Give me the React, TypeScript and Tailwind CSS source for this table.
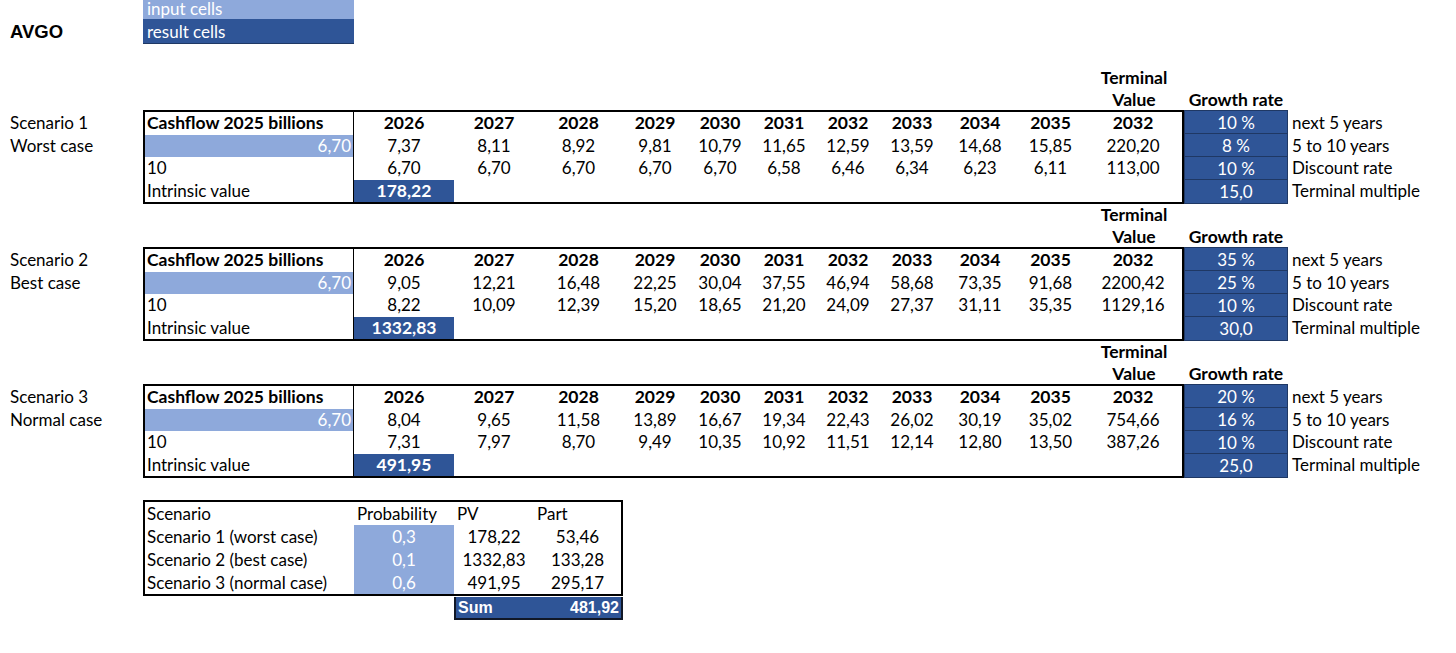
import React from "react"

const years = ["2026", "2027", "2028", "2029", "2030", "2031", "2032", "2033", "2034", "2035"]

// inner widths of the year columns (C..L) and the terminal value column
const colW = [
  "w-[100px]",
  "w-[80px]",
  "w-[89px]",
  "w-[64px]",
  "w-[66px]",
  "w-[62px]",
  "w-[66px]",
  "w-[62px]",
  "w-[74px]",
  "w-[67px]",
  "w-[98px]",
]

const growthLabels = ["next 5 years", "5 to 10 years", "Discount rate", "Terminal multiple"]

interface Scenario {
  title: string
  name: string
  projected: string[]
  discounted: string[]
  intrinsic: string
  growth: string[]
}

const scenarios: Scenario[] = [
  {
    title: "Scenario 1",
    name: "Worst case",
    projected: ["7,37", "8,11", "8,92", "9,81", "10,79", "11,65", "12,59", "13,59", "14,68", "15,85", "220,20"],
    discounted: ["6,70", "6,70", "6,70", "6,70", "6,70", "6,58", "6,46", "6,34", "6,23", "6,11", "113,00"],
    intrinsic: "178,22",
    growth: ["10 %", "8 %", "10 %", "15,0"],
  },
  {
    title: "Scenario 2",
    name: "Best case",
    projected: ["9,05", "12,21", "16,48", "22,25", "30,04", "37,55", "46,94", "58,68", "73,35", "91,68", "2200,42"],
    discounted: ["8,22", "10,09", "12,39", "15,20", "18,65", "21,20", "24,09", "27,37", "31,11", "35,35", "1129,16"],
    intrinsic: "1332,83",
    growth: ["35 %", "25 %", "10 %", "30,0"],
  },
  {
    title: "Scenario 3",
    name: "Normal case",
    projected: ["8,04", "9,65", "11,58", "13,89", "16,67", "19,34", "22,43", "26,02", "30,19", "35,02", "754,66"],
    discounted: ["7,31", "7,97", "8,70", "9,49", "10,35", "10,92", "11,51", "12,14", "12,80", "13,50", "387,26"],
    intrinsic: "491,95",
    growth: ["20 %", "16 %", "10 %", "25,0"],
  },
]

const summary = [
  { name: "Scenario 1 (worst case)", p: "0,3", pv: "178,22", part: "53,46" },
  { name: "Scenario 2 (best case)", p: "0,1", pv: "1332,83", part: "133,28" },
  { name: "Scenario 3 (normal case)", p: "0,6", pv: "491,95", part: "295,17" },
]

function ScenarioBlock({ s }: { s: Scenario }) {
  return (
    <div className="flex flex-col">
      {/* header above the table */}
      <div className="flex h-[43px] text-[17.5px] font-bold">
        <div className="w-[1084px]" />
        <div className="flex w-[100px] flex-col items-center leading-[21.5px]">
          <span>Terminal</span>
          <span>Value</span>
        </div>
        <div className="flex w-[104px] items-end justify-center whitespace-nowrap leading-[21.5px]">Growth rate</div>
      </div>

      <div className="flex">
        <div className="flex w-[143px] flex-col pl-[10px] pt-[2px]">
          <div className="flex h-[22.5px] items-center">{s.title}</div>
          <div className="flex h-[22.5px] items-center">{s.name}</div>
        </div>

        <div className="flex w-[1041px] flex-col border-2 border-black">
          <div className="flex h-[22.5px] items-center text-[17.5px] font-bold">
            <div className="flex h-full w-[209px] items-center whitespace-nowrap border-r border-black pl-[2px]">
              Cashflow 2025 billions
            </div>
            {[...years, "2032"].map((y, i) => (
              <div key={i} className={`${colW[i]} text-center`}>
                {y}
              </div>
            ))}
          </div>
          <div className="flex h-[22.5px] items-center">
            <div className="flex h-full w-[209px] items-center justify-end border-r border-black bg-[#8ea9db] pr-[2px] text-white">
              6,70
            </div>
            {s.projected.map((v, i) => (
              <div key={i} className={`${colW[i]} text-center`}>
                {v}
              </div>
            ))}
          </div>
          <div className="flex h-[22.5px] items-center">
            <div className="flex h-full w-[209px] items-center border-r border-black pl-[2px]">10</div>
            {s.discounted.map((v, i) => (
              <div key={i} className={`${colW[i]} text-center`}>
                {v}
              </div>
            ))}
          </div>
          <div className="flex h-[22.5px] items-center">
            <div className="flex h-full w-[209px] items-center border-r border-black pl-[2px]">Intrinsic value</div>
            <div className="flex h-full w-[100px] items-center justify-center bg-[#2f5597] text-[17.5px] font-bold text-white">
              {s.intrinsic}
            </div>
          </div>
        </div>

        <div className="flex h-[94px] w-[104px] flex-col border border-[#1f3864] bg-[#2f5597] text-white">
          {s.growth.map((g, i) => (
            <div
              key={i}
              className={`flex h-[23px] items-center justify-center pt-[1px] ${i < 3 ? "border-b border-[#1f3864]" : ""}`}
            >
              {g}
            </div>
          ))}
        </div>

        <div className="flex flex-col pl-[4px] pt-[2px]">
          {growthLabels.map((l) => (
            <div key={l} className="flex h-[22.5px] items-center whitespace-nowrap">
              {l}
            </div>
          ))}
        </div>
      </div>
    </div>
  )
}

export default function App() {
  return (
    <div className="h-[653px] w-[1456px] overflow-hidden bg-white font-['Lato',sans-serif] text-[17px] leading-[20px] text-black">
      <div className="-mt-[4px] flex flex-col">
        <div className="flex h-[23px]">
          <div className="w-[143px]" />
          <div className="flex w-[211px] items-center bg-[#8ea9db] pl-[4px] pt-[3px] text-white">input cells</div>
        </div>
        <div className="flex h-[25px]">
          <div className="flex w-[143px] items-center pl-[10px] font-['Liberation_Sans',Arial,sans-serif] text-[18.5px] font-bold">
            AVGO
          </div>
          <div className="flex w-[211px] items-center border-b border-[#1f3864] bg-[#2f5597] pl-[4px] pt-[2px] text-white">
            result cells
          </div>
        </div>
        <div className="h-[23px]" />

        {scenarios.map((s) => (
          <ScenarioBlock key={s.title} s={s} />
        ))}

        <div className="h-[22px]" />

        <div className="ml-[143px] flex w-[480px] flex-col border-2 border-black">
          <div className="flex h-[23px] items-center">
            <div className="w-[209px] pl-[2px]">Scenario</div>
            <div className="w-[100px] pl-[3px]">Probability</div>
            <div className="w-[80px] pl-[3px]">PV</div>
            <div className="w-[87px] pl-[3px]">Part</div>
          </div>
          {summary.map((r) => (
            <div key={r.name} className="flex h-[23px] items-center">
              <div className="w-[209px] whitespace-nowrap pl-[2px]">{r.name}</div>
              <div className="flex h-full w-[100px] items-center justify-center bg-[#8ea9db] text-white">{r.p}</div>
              <div className="w-[80px] text-center">{r.pv}</div>
              <div className="w-[87px] text-center">{r.part}</div>
            </div>
          ))}
        </div>
        <div className="ml-[454px] mt-[1px] flex h-[23px] w-[169px] items-center justify-between border-2 border-t-0 border-[#111827] bg-[#2f5597] px-[2px] font-['Liberation_Sans',Arial,sans-serif] text-[16px] font-bold text-white">
          <span>Sum</span>
          <span>481,92</span>
        </div>
      </div>
    </div>
  )
}
